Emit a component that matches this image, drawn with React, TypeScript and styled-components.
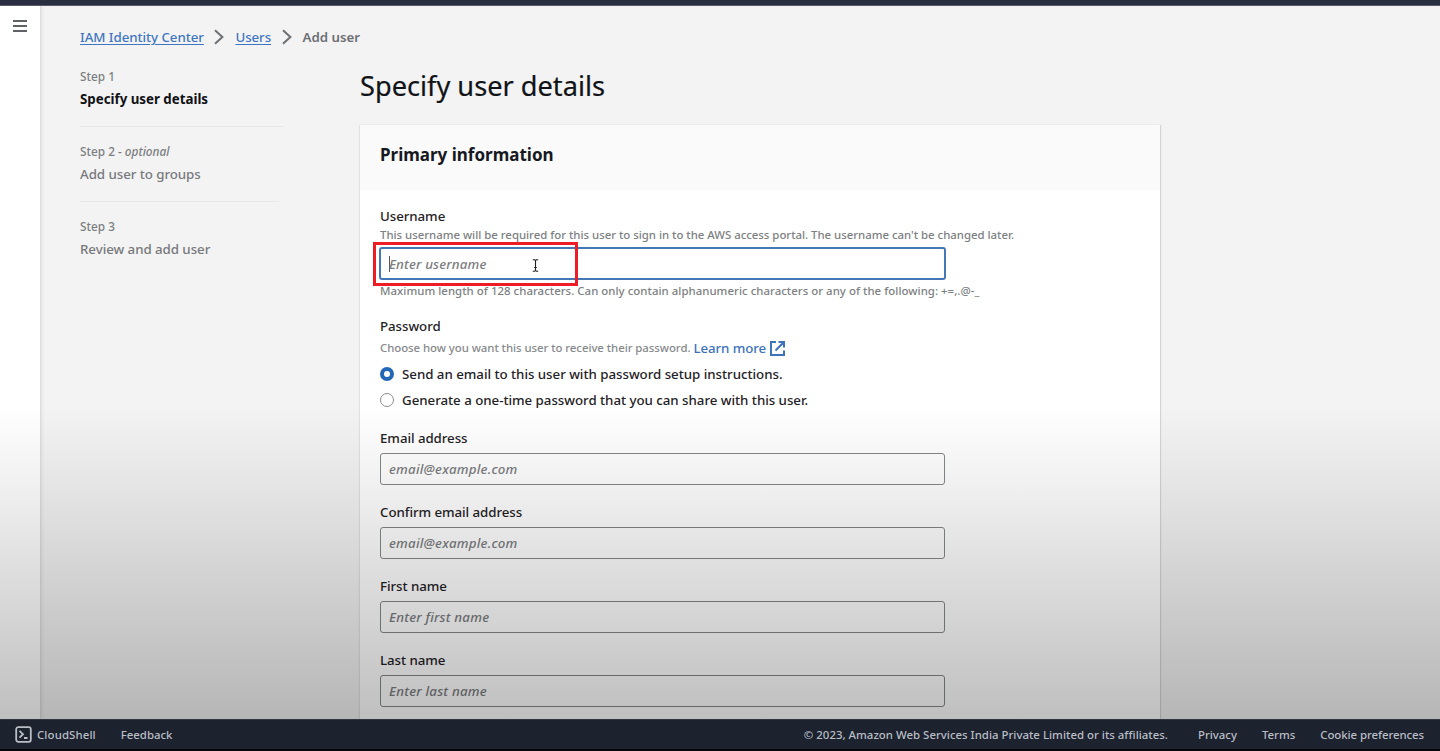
import React from "react";
import styled, { createGlobalStyle, css } from "styled-components";

const GlobalStyle = createGlobalStyle`
  *, *::before, *::after { box-sizing: border-box; }
  html, body { margin: 0; padding: 0; }
  body {
    font-family: "Noto Sans", "Open Sans", sans-serif;
    font-size: 13.3px;
    line-height: 20px;
    color: #1f2226;
    overflow: hidden;
  }
`;

const Page = styled.div`
  display: flex;
  flex-direction: column;
  height: 751px;
  overflow: hidden;
  background: #f3f3f3;
`;

const TopBar = styled.div`
  flex: none;
  height: 6px;
  background: #292f40;
  border-bottom: 1px solid #565b68;
`;

const Main = styled.div`
  position: relative;
  flex: 1;
  display: flex;
  min-height: 0;
  overflow: hidden;
`;

const SideRail = styled.aside`
  flex: none;
  width: 41px;
  padding: 14px 0 0 13px;
  background: #fff;
  border-right: 1px solid #dedede;
  box-shadow: 1px 0 3px rgba(0, 0, 0, 0.08);
`;

const MenuIcon = styled.svg`
  display: block;
  width: 14px;
  height: 12px;
`;

const Shade = styled.div`
  position: absolute;
  inset: 400px 0 0 0;
  pointer-events: none;
  background: linear-gradient(rgba(0, 0, 0, 0), rgba(0, 0, 0, 0.055) 24%, rgba(0, 0, 0, 0.25));
`;

const Content = styled.div`
  flex: 1;
  display: flex;
  flex-direction: column;
  padding: 21px 39px 0;
  min-width: 0;
`;

const Breadcrumbs = styled.nav`
  flex: none;
  display: flex;
  align-items: center;
  height: 20px;
`;

const CrumbLink = styled.a`
  color: #3f76c2;
  font-weight: 500;
  text-decoration: underline;
  text-underline-offset: 2px;
  letter-spacing: -0.06px;
`;

const CrumbCurrent = styled.span`
  color: #6d6f73;
  font-weight: 600;
  letter-spacing: -0.03px;
`;

const CrumbArrow = styled.svg`
  width: 10px;
  height: 16px;
  margin: 0 11px 0 10.5px;
`;

const Columns = styled.div`
  display: flex;
  flex: 1;
  min-height: 0;
`;

const Steps = styled.ol`
  list-style: none;
  margin: 0;
  padding: 20px 0 0;
  width: 280px;
  flex: none;
`;

const StepItem = styled.li<{ $width?: number }>`
  width: ${(p) => p.$width ?? 204}px;
  height: 60px;
  margin-bottom: 15px;
  border-bottom: 1px solid #e6e7e8;
  &:last-child { border-bottom: 0; }
`;

const StepLabel = styled.div`
  height: 18px;
  line-height: 18px;
  font-size: 11.8px;
  font-weight: 500;
  color: #7b7e81;
`;

const StepTitle = styled.div<{ $active?: boolean }>`
  margin-top: 4px;
  font-weight: 500;
  color: #77797c;
  letter-spacing: -0.05px;
  ${(p) =>
    p.$active &&
    css`
      color: #0f1114;
      font-weight: 700;
      letter-spacing: 0;
    `}
`;

const FormColumn = styled.main`
  width: 800px;
  display: flex;
  flex-direction: column;
`;

const Title = styled.h1`
  flex: none;
  margin: 20px 0 21px;
  height: 37px;
  font-size: 27.2px;
  line-height: 37px;
  font-weight: 400;
  color: #111317;
  -webkit-text-stroke: 0.2px #111317;
`;

const Card = styled.section`
  flex: none;
  width: 800px;
  height: 700px;
  background: #fff;
  box-shadow: -1px 0 1px #e2e2e2, 1px 0 1px #d4d5d6;
`;

const CardHeader = styled.header`
  height: 65px;
  padding: 19px 20px 0;
  background: #fafafa;
`;

const CardTitle = styled.h2`
  margin: 0;
  font-size: 17px;
  line-height: 22px;
  font-weight: 700;
  color: #16191f;
`;

const CardBody = styled.div`
  padding: 16px 20px;
`;

const Field = styled.div`
  margin-bottom: 17px;
`;

const Label = styled.div`
  height: 20px;
  font-weight: 500;
  letter-spacing: -0.06px;
`;

const Hint = styled.div<{ $spacing: number }>`
  height: 16px;
  line-height: 16px;
  font-size: 11.4px;
  font-weight: 500;
  color: #7d7f82;
  white-space: nowrap;
  letter-spacing: ${(p) => p.$spacing}px;
`;

const Description = styled(Hint)`
  margin-top: 1px;
`;

const InputBox = styled.div`
  display: flex;
  align-items: center;
  width: 565px;
  height: 32px;
  margin-top: 5px;
  padding-left: 8px;
  border: 1px solid #85878a;
  border-radius: 3px;
  font-style: italic;
  font-weight: 500;
  color: #7b7d80;
  letter-spacing: 0.22px;
`;

const FocusedInput = styled(InputBox)`
  position: relative;
  width: 567px;
  height: 33px;
  margin: 4px 0 3px -1px;
  border: 2px solid #4478b5;
  letter-spacing: 0.16px;
`;

const Caret = styled.span`
  width: 1px;
  height: 16px;
  margin-right: -1px;
  background: #55585c;
`;

const Highlight = styled.div`
  position: absolute;
  left: -8px;
  top: -7px;
  width: 205px;
  height: 44px;
  border: 3px solid #ee1c25;
`;

const Pointer = styled.svg`
  position: absolute;
  left: 151px;
  top: 10px;
  width: 7px;
  height: 13px;
`;

const PasswordHint = styled.div`
  display: flex;
  align-items: center;
  height: 20px;
  margin: 2px 0 6px;
  font-size: 11.4px;
  font-weight: 500;
  color: #87898c;
  letter-spacing: -0.05px;
`;

const LearnMore = styled.a`
  display: flex;
  align-items: center;
  gap: 4px;
  margin-left: 3px;
  font-size: 13.3px;
  color: #3d73bb;
  letter-spacing: -0.08px;
`;

const RadioRow = styled.div`
  display: flex;
  align-items: center;
  height: 20px;
  margin-bottom: 6px;
  font-weight: 500;
  letter-spacing: -0.03px;
`;

const RadioDot = styled.span<{ $checked?: boolean }>`
  width: 14px;
  height: 14px;
  margin-right: 8px;
  border-radius: 50%;
  background: #fff;
  border: ${(p) => (p.$checked ? "4px solid #2268b6" : "1px solid #8a8c8f")};
`;

const RadioGroup = styled.div`
  margin-bottom: 18px;
`;

const Footer = styled.footer`
  flex: none;
  display: flex;
  align-items: center;
  height: 32px;
  padding: 0 16px 0 15px;
  background: #1c222e;
  border-top: 1px solid #30353f;
  border-bottom: 2px solid #06070a;
  font-size: 11.4px;
  font-weight: 500;
  color: #b9bec6;
`;

const ShellIcon = styled.svg`
  width: 17px;
  height: 17px;
  margin-right: 5px;
`;

const FooterText = styled.span<{ $left?: string; $spacing?: number }>`
  margin-left: ${(p) => p.$left ?? "0"};
  letter-spacing: ${(p) => p.$spacing ?? 0}px;
  white-space: nowrap;
`;

const Arrow = () => (
  <CrumbArrow viewBox="0 0 10 16" fill="none" stroke="#6d7073" strokeWidth="2">
    <path d="M1 1.2 8.4 8 1 14.8" />
  </CrumbArrow>
);

const fields = [
  { label: "Email address", placeholder: "email@example.com" },
  { label: "Confirm email address", placeholder: "email@example.com" },
  { label: "First name", placeholder: "Enter first name" },
  { label: "Last name", placeholder: "Enter last name" },
];

export default function App() {
  return (
    <Page>
      <GlobalStyle />
      <TopBar />
      <Main>
        <SideRail>
          <MenuIcon viewBox="0 0 14 12" stroke="#5f6266" strokeWidth="2">
            <path d="M0 1h14M0 6h14M0 11h14" />
          </MenuIcon>
        </SideRail>
        <Content>
          <Breadcrumbs>
            <CrumbLink>IAM Identity Center</CrumbLink>
            <Arrow />
            <CrumbLink>Users</CrumbLink>
            <Arrow />
            <CrumbCurrent>Add user</CrumbCurrent>
          </Breadcrumbs>
          <Columns>
            <Steps>
              <StepItem>
                <StepLabel>Step 1</StepLabel>
                <StepTitle $active>Specify user details</StepTitle>
              </StepItem>
              <StepItem $width={199}>
                <StepLabel>
                  Step 2 - <em>optional</em>
                </StepLabel>
                <StepTitle>Add user to groups</StepTitle>
              </StepItem>
              <StepItem>
                <StepLabel>Step 3</StepLabel>
                <StepTitle>Review and add user</StepTitle>
              </StepItem>
            </Steps>
            <FormColumn>
              <Title>Specify user details</Title>
              <Card>
                <CardHeader>
                  <CardTitle>Primary information</CardTitle>
                </CardHeader>
                <CardBody>
                  <Field>
                    <Label>Username</Label>
                    <Description $spacing={-0.012}>
                      This username will be required for this user to sign in to the AWS access portal. The
                      username can't be changed later.
                    </Description>
                    <FocusedInput>
                      <Caret />
                      Enter username
                      <Pointer viewBox="0 0 7 13" fill="none" stroke="#222" strokeWidth="1.1">
                        <path d="M.8.8h1.7l1 .7 1-.7h1.7M3.5 1.5v10M.8 12.2h1.7l1-.7 1 .7h1.7M2.2 8.5h2.6" />
                      </Pointer>
                      <Highlight />
                    </FocusedInput>
                    <Hint $spacing={0.04}>
                      Maximum length of 128 characters. Can only contain alphanumeric characters or any of the
                      following: +=,.@-_
                    </Hint>
                  </Field>
                  <Label>Password</Label>
                  <PasswordHint>
                    Choose how you want this user to receive their password.
                    <LearnMore>
                      Learn more
                      <svg width="15" height="15" viewBox="0 0 15 15" fill="none" stroke="#3d73bb" strokeWidth="2">
                        <path d="M6 1H1v13h13V9.5M8.5 1H14v5.500M14 1 5.500 9.500" />
                      </svg>
                    </LearnMore>
                  </PasswordHint>
                  <RadioGroup>
                    <RadioRow>
                      <RadioDot $checked />
                      Send an email to this user with password setup instructions.
                    </RadioRow>
                    <RadioRow>
                      <RadioDot />
                      Generate a one-time password that you can share with this user.
                    </RadioRow>
                  </RadioGroup>
                  {fields.map((f) => (
                    <Field key={f.label}>
                      <Label>{f.label}</Label>
                      <InputBox>{f.placeholder}</InputBox>
                    </Field>
                  ))}
                </CardBody>
              </Card>
            </FormColumn>
          </Columns>
        </Content>
        <Shade />
      </Main>
      <Footer>
        <ShellIcon viewBox="0 0 17 17" fill="none" stroke="#b9bec6" strokeWidth="1.8">
          <rect x="1.2" y="1.2" width="14.6" height="14.6" rx="2" />
          <path d="M4.5 4.8 8 8.2l-3.5 3.4M9 12h3.5" />
        </ShellIcon>
        <FooterText $spacing={0.12}>CloudShell</FooterText>
        <FooterText $left="25px">Feedback</FooterText>
        <FooterText $left="auto" $spacing={0.02}>
          © 2023, Amazon Web Services India Private Limited or its affiliates.
        </FooterText>
        <FooterText $left="30px">Privacy</FooterText>
        <FooterText $left="25px">Terms</FooterText>
        <FooterText $left="25px" $spacing={-0.06}>
          Cookie preferences
        </FooterText>
      </Footer>
    </Page>
  );
}
